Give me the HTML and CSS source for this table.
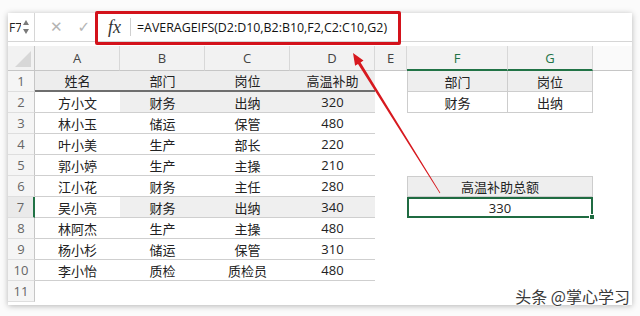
FILE: index.html
```html
<!DOCTYPE html>
<html lang="zh">
<head>
<meta charset="utf-8">
<title>AVERAGEIFS</title>
<link rel="stylesheet" href="styles.css">
</head>
<body>
<div class="window">
  <div class="formula-bar">
    <div class="namebox"><span class="nb-text">F7</span><span class="spin"><i class="up"></i><i class="down"></i></span></div>
    <div class="fb-btns"><span class="cancel">✕</span><span class="enter">✓</span></div>
    <div class="fx">fx</div>
    <div class="formula">=AVERAGEIFS(D2:D10,B2:B10,F2,C2:C10,G2)</div>
  </div>
  <div class="sheet">
    <div class="ch corner"></div>
    <div class="ch">A</div><div class="ch">B</div><div class="ch">C</div><div class="ch">D</div><div class="ch">E</div><div class="ch sel">F</div><div class="ch sel">G</div><div class="ch rest"></div>

    <div class="rh">1</div>
    <div class="c th">姓名</div><div class="c th">部门</div><div class="c th">岗位</div><div class="c th">高温补助</div><div class="c"></div><div class="c bf th2 fl">部门</div><div class="c bf th2">岗位</div><div class="c"></div>

    <div class="rh">2</div>
    <div class="c tb">方小文</div><div class="c tb hl">财务</div><div class="c tb hl">出纳</div><div class="c tb hl">320</div><div class="c"></div><div class="c bf fl">财务</div><div class="c bf">出纳</div><div class="c"></div>

    <div class="rh">3</div>
    <div class="c tb">林小玉</div><div class="c tb">储运</div><div class="c tb">保管</div><div class="c tb">480</div><div class="c"></div><div class="c"></div><div class="c"></div><div class="c"></div>

    <div class="rh">4</div>
    <div class="c tb">叶小美</div><div class="c tb">生产</div><div class="c tb">部长</div><div class="c tb">220</div><div class="c"></div><div class="c"></div><div class="c"></div><div class="c"></div>

    <div class="rh">5</div>
    <div class="c tb">郭小婷</div><div class="c tb">生产</div><div class="c tb">主操</div><div class="c tb">210</div><div class="c"></div><div class="c"></div><div class="c"></div><div class="c"></div>

    <div class="rh">6</div>
    <div class="c tb">江小花</div><div class="c tb">财务</div><div class="c tb">主任</div><div class="c tb">280</div><div class="c"></div><div class="c span2 total-h">高温补助总额</div><div class="c"></div>

    <div class="rh rsel">7</div>
    <div class="c tb">吴小亮</div><div class="c tb hl">财务</div><div class="c tb hl">出纳</div><div class="c tb hl">340</div><div class="c"></div><div class="c span2 total-v">330<span class="handle"></span></div><div class="c"></div>

    <div class="rh">8</div>
    <div class="c tb">林阿杰</div><div class="c tb">生产</div><div class="c tb">主操</div><div class="c tb">480</div><div class="c"></div><div class="c"></div><div class="c"></div><div class="c"></div>

    <div class="rh">9</div>
    <div class="c tb">杨小杉</div><div class="c tb">储运</div><div class="c tb">保管</div><div class="c tb">310</div><div class="c"></div><div class="c"></div><div class="c"></div><div class="c"></div>

    <div class="rh">10</div>
    <div class="c tb">李小怡</div><div class="c tb">质检</div><div class="c tb">质检员</div><div class="c tb">480</div><div class="c"></div><div class="c"></div><div class="c"></div><div class="c"></div>

    <div class="rh">11</div>
    <div class="c"></div><div class="c"></div><div class="c"></div><div class="c"></div><div class="c"></div><div class="c"></div><div class="c"></div><div class="c"></div>
  </div>
</div>

<div class="annot-box"></div>
<svg class="arrow" width="640" height="316" viewBox="0 0 640 316">
  <polygon points="353,53 363.5,60.6 360.6,62.4 440.3,192.8 439.7,193.2 358,64 355.1,65.8" fill="#d7191f"/>
</svg>
<div class="watermark">头条 @掌心学习</div>
</body>
</html>
```

FILE: styles.css
```css
* { box-sizing: border-box; }

html, body { margin: 0; }

body {
  width: 640px;
  height: 316px;
  padding: 13px 8px 0 8px;
  background: #fbfbfb;
  font-family: "Noto Sans CJK SC", "Noto Sans", sans-serif;
  color: #222;
  position: relative;
  overflow: hidden;
}

.window {
  width: 624px;
  height: 292px;
  background: #fff;
  box-shadow: 0 1px 6px rgba(0, 0, 0, 0.28);
  display: flex;
  flex-direction: column;
  overflow: hidden;
}

/* ---------- formula bar ---------- */
.formula-bar {
  height: 29px;
  flex: none;
  display: flex;
  align-items: center;
  border-bottom: 1px solid #d6d6d6;
  margin-bottom: 4px;
}

.namebox {
  width: 27px;
  height: 100%;
  border-right: 1px solid #d6d6d6;
  display: flex;
  align-items: center;
  overflow: hidden;
  font-family: "Open Sans", sans-serif;
  font-size: 12px;
  color: #222;
}

.nb-text {
  width: 13px;
  padding-left: 1px;
  overflow: hidden;
  white-space: nowrap;
}

.spin {
  width: 10px;
  display: flex;
  flex-direction: column;
  align-items: center;
  gap: 4px;
}

.spin i {
  display: block;
  width: 0;
  height: 0;
  border-left: 3.5px solid transparent;
  border-right: 3.5px solid transparent;
}

.spin .up { border-bottom: 5px solid #7a7a7a; }
.spin .down { border-top: 5px solid #7a7a7a; }

.fb-btns {
  width: 66px;
  display: flex;
  align-items: center;
  padding-left: 15px;
  gap: 15px;
  color: #b4b4b4;
  font-family: "DejaVu Sans", sans-serif;
  font-size: 15px;
}

.fx {
  width: 30px;
  padding-left: 7px;
  font-family: "Liberation Serif", serif;
  font-style: italic;
  font-size: 18px;
  color: #333;
  border-right: 1px solid #d0d0d0;
  line-height: 18px;
}

.formula {
  padding-left: 6px;
  font-family: "Open Sans", sans-serif;
  font-size: 12.4px;
  color: #111;
  white-space: nowrap;
}

/* ---------- sheet grid ---------- */
.sheet {
  flex: 1;
  display: grid;
  grid-template-columns: 27px 85px 85px 85px 85px 32px 101px 85px 1fr;
  grid-template-rows: 25px repeat(11, 21px);
  overflow: hidden;
  font-size: 13px;
}

.ch {
  background: #f2f2f2;
  border-right: 1px solid #d8d8d8;
  border-bottom: 1px solid #c6c6c6;
  display: flex;
  align-items: center;
  justify-content: center;
  font-family: "Open Sans", sans-serif;
  font-size: 13px;
  color: #444;
}

.ch.corner {
  position: relative;
  border-right: 1px solid #c6c6c6;
}

.ch.corner::after {
  content: "";
  position: absolute;
  right: 3px;
  bottom: 3px;
  width: 0;
  height: 0;
  border-left: 16px solid transparent;
  border-bottom: 16px solid #d7d7d7;
}

.ch.sel {
  color: #217346;
  border-bottom: 2px solid #217346;
}

.ch.rest {
  background: #fafafa;
  border-right: none;
}

.rh {
  background: #f5f5f5;
  border-right: 1px solid #c6c6c6;
  border-bottom: 1px solid #dedede;
  display: flex;
  align-items: center;
  justify-content: center;
  font-family: "Open Sans", sans-serif;
  font-size: 13px;
  color: #666;
}

.rh.rsel {
  border-right: 2px solid #217346;
  background: #eaeaea;
}

.c {
  display: flex;
  align-items: center;
  justify-content: center;
  font-family: "Open Sans", "Noto Sans CJK SC", sans-serif;
  font-size: 13px;
  color: #222;
  white-space: nowrap;
}

.c.th {
  background: #ededed;
  border-bottom: 2px solid #6e6e6e;
}

.c.tb { border-bottom: 1px solid #cfcfcf; }

.c.hl { background: #efefef; }

.c.bf {
  border-right: 1px solid #cdcdcd;
  border-bottom: 1px solid #cdcdcd;
}

.c.fl { border-left: 1px solid #cdcdcd; }

.c.th2 { background: #eeeeee; }

.c.span2 { grid-column: span 2; }

.c.total-h {
  background: #eeeeee;
  border: 1px solid #cdcdcd;
}

.c.total-v {
  position: relative;
  border: 2px solid #1f6b41;
}

.handle {
  position: absolute;
  right: -4px;
  bottom: -4px;
  width: 6px;
  height: 6px;
  background: #1f6b41;
  border: 1px solid #fff;
}

/* ---------- annotations ---------- */
.annot-box {
  position: absolute;
  left: 95px;
  top: 11px;
  width: 306px;
  height: 34px;
  border: 3px solid #d3121b;
  border-radius: 2px;
}

.arrow {
  position: absolute;
  left: 0;
  top: 0;
  pointer-events: none;
}

.watermark {
  position: absolute;
  right: 10px;
  bottom: 8px;
  font-family: "Noto Sans CJK SC", sans-serif;
  font-size: 16px;
  color: #3a3a3a;
  text-shadow: 0 0 2px #fff, 0 0 2px #fff, 0 0 3px #fff;
}
```
